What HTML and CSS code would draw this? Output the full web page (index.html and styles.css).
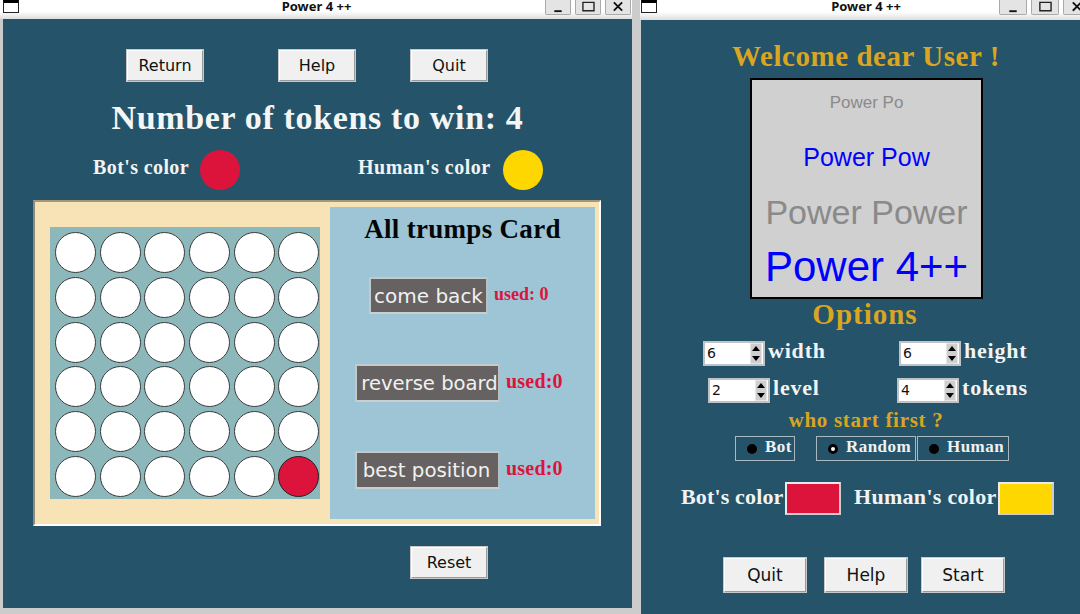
FILE: index.html
```html
<!DOCTYPE html>
<html lang="en">
<head>
<meta charset="utf-8">
<title>Power 4 ++</title>
<link rel="stylesheet" href="styles.css">
</head>
<body>
<main class="desktop">
  <section class="window game-window">
    <header class="titlebar">
      <span class="win-icon"></span>
      <span class="win-title">Power 4 ++</span>
      <span class="win-controls">
        <span class="ctl"><svg viewBox="0 0 26 15"><path d="M9 11h8v2H9z" fill="#111"/></svg></span>
        <span class="ctl"><svg viewBox="0 0 26 15"><path d="M7.500 2.500h12v9h-12z" fill="none" stroke="#222" stroke-width="1.500"/></svg></span>
        <span class="ctl"><svg viewBox="0 0 26 15"><path d="M8.500 2.500l9 9M17.500 2.500l-9 9" fill="none" stroke="#111" stroke-width="2"/></svg></span>
      </span>
    </header>
    <div class="game-body">
      <div class="top-buttons">
        <button class="btn btn-top">Return</button>
        <button class="btn btn-top">Help</button>
        <button class="btn btn-top">Quit</button>
      </div>
      <h1 class="tokens-title">Number of tokens to win: 4</h1>
      <div class="color-row">
        <span class="color-label bot-label">Bot's color</span>
        <span class="token-dot crimson"></span>
        <span class="color-label human-label">Human's color</span>
        <span class="token-dot gold"></span>
      </div>
      <div class="play-panel">
        <div class="board">
          <span class="cell"></span><span class="cell"></span><span class="cell"></span><span class="cell"></span><span class="cell"></span><span class="cell"></span>
          <span class="cell"></span><span class="cell"></span><span class="cell"></span><span class="cell"></span><span class="cell"></span><span class="cell"></span>
          <span class="cell"></span><span class="cell"></span><span class="cell"></span><span class="cell"></span><span class="cell"></span><span class="cell"></span>
          <span class="cell"></span><span class="cell"></span><span class="cell"></span><span class="cell"></span><span class="cell"></span><span class="cell"></span>
          <span class="cell"></span><span class="cell"></span><span class="cell"></span><span class="cell"></span><span class="cell"></span><span class="cell"></span>
          <span class="cell"></span><span class="cell"></span><span class="cell"></span><span class="cell"></span><span class="cell"></span><span class="cell cell-red"></span>
        </div>
        <aside class="trumps">
          <h2 class="trumps-title">All trumps Card</h2>
          <div class="trump-row row-back">
            <button class="btn-dark btn-back">come back</button>
            <span class="used used-small">used: 0</span>
          </div>
          <div class="trump-row row-wide">
            <button class="btn-dark btn-wide btn-reverse">reverse board</button>
            <span class="used">used:0</span>
          </div>
          <div class="trump-row row-wide">
            <button class="btn-dark btn-wide btn-best">best position</button>
            <span class="used">used:0</span>
          </div>
        </aside>
      </div>
      <div class="reset-row"><button class="btn btn-top">Reset</button></div>
    </div>
  </section>

  <section class="window menu-window">
    <header class="titlebar">
      <span class="win-icon"></span>
      <span class="win-title">Power 4 ++</span>
      <span class="win-controls">
        <span class="ctl"><svg viewBox="0 0 26 15"><path d="M9 11h8v2H9z" fill="#111"/></svg></span>
        <span class="ctl"><svg viewBox="0 0 26 15"><path d="M7.500 2.500h12v9h-12z" fill="none" stroke="#222" stroke-width="1.500"/></svg></span>
        <span class="ctl"><svg viewBox="0 0 26 15"><path d="M8.500 2.500l9 9M17.500 2.500l-9 9" fill="none" stroke="#111" stroke-width="2"/></svg></span>
      </span>
    </header>
    <div class="menu-body">
      <h1 class="welcome">Welcome dear User !</h1>
      <div class="splash">
        <span class="splash-line s1">Power Po</span>
        <span class="splash-line s2">Power Pow</span>
        <span class="splash-line s3">Power Power</span>
        <span class="splash-line s4">Power 4++</span>
      </div>
      <h2 class="options">Options</h2>
      <div class="opt-row opt-row-a">
        <span class="spin"><span class="spin-val">6</span><span class="arrows"><i class="up"></i><i class="down"></i></span></span>
        <span class="opt-label label-width">width</span>
        <span class="spin"><span class="spin-val">6</span><span class="arrows"><i class="up"></i><i class="down"></i></span></span>
        <span class="opt-label">height</span>
      </div>
      <div class="opt-row opt-row-b">
        <span class="spin"><span class="spin-val">2</span><span class="arrows"><i class="up"></i><i class="down"></i></span></span>
        <span class="opt-label label-level">level</span>
        <span class="spin"><span class="spin-val">4</span><span class="arrows"><i class="up"></i><i class="down"></i></span></span>
        <span class="opt-label">tokens</span>
      </div>
      <h3 class="who">who start first ?</h3>
      <div class="radios">
        <span class="radio radio-bot"><i class="mark"></i>Bot</span>
        <span class="radio radio-random"><i class="mark mark-on"></i>Random</span>
        <span class="radio radio-human"><i class="mark"></i>Human</span>
      </div>
      <div class="pick-row">
        <span class="pick-label">Bot's color</span>
        <span class="swatch crimson"></span>
        <span class="pick-label pick-human">Human's color</span>
        <span class="swatch gold"></span>
      </div>
      <div class="menu-buttons">
        <button class="btn btn-menu">Quit</button>
        <button class="btn btn-menu">Help</button>
        <button class="btn btn-menu">Start</button>
      </div>
    </div>
  </section>
</main>
</body>
</html>
```

FILE: styles.css
```css
* { box-sizing: border-box; }
html, body { margin: 0; padding: 0; width: 1080px; height: 614px; overflow: hidden; background: #cccccc; }
h1, h2, h3 { margin: 0; }
.desktop { display: flex; width: 1080px; height: 614px; overflow: hidden; }
.window { display: flex; flex-direction: column; flex: none; }
.game-window { width: 632px; height: 608px; margin-right: 8px; }
.menu-window { width: 440px; height: 614px; }

.titlebar { position: relative; flex: none; height: 19px; background: linear-gradient(#ffffff 0, #ffffff 60%, #dddddd 100%); display: block; }
.menu-window .titlebar { height: 20px; }
.win-icon { position: absolute; left: 3px; top: 0; width: 16px; height: 13px; background: #fff; border: 1px solid #222; border-top: 3px solid #000; }
.menu-window .win-icon { left: 1px; }
.win-title { display: block; text-align: center; font: bold 13px/12px "Noto Sans", "DejaVu Sans", sans-serif; color: #111; padding-left: 1px; }
.menu-window .win-title { padding-left: 12px; }
.win-controls { position: absolute; right: 1px; top: 0; display: flex; gap: 4px; }
.menu-window .win-controls { right: -11px; }
.ctl { display: block; width: 26px; height: 15px; background: #e4e4e4; border: 1px solid #aaaaaa; border-top: 0; border-radius: 0 0 2px 2px; }
.menu-window .ctl { width: 28px; }
.ctl svg { display: block; width: 24px; height: 14px; }
.menu-window .ctl svg { width: 26px; }

.btn { font-family: "DejaVu Sans", sans-serif; font-size: 16px; color: #111; background: #f0f0f0; border: 2px solid; border-color: #ffffff #9a9a9a #9a9a9a #ffffff; padding: 0; outline: 1px solid #c8c8c8; outline-offset: -1px; }
.btn-top { width: 78px; height: 33px; }
.btn-menu { width: 84px; height: 36px; font-size: 17px; }

.game-body { width: 629px; height: 589px; margin-left: 3px; background: #255369; padding-top: 30px; }
.top-buttons { display: flex; padding-left: 123px; }
.top-buttons .btn + .btn { margin-left: 74px; }
.top-buttons .btn + .btn + .btn { margin-left: 54px; }
.tokens-title { margin-top: 18px; height: 36px; font: bold 34px/36px "Liberation Serif", serif; letter-spacing: 0.65px; color: #f4f6f6; text-align: center; }
.color-row { display: flex; align-items: center; height: 40px; margin-top: 14px; padding-left: 90px; }
.color-label { font: bold 20px/24px "Liberation Serif", serif; letter-spacing: 0.4px; color: #f1f3f4; white-space: nowrap; margin-top: -6px; }
.bot-label { width: 107px; }
.human-label { width: 145px; margin-left: 118px; letter-spacing: 0.5px; }
.token-dot { width: 40px; height: 40px; border-radius: 50%; display: block; flex: none; }
.crimson { background: #dc143c; }
.gold { background: #ffd700; }

.play-panel { display: flex; align-items: flex-start; gap: 10px; width: 568px; height: 326px; margin-top: 10px; margin-left: 30px; padding: 5px 4px 5px 15px; background: #f8e3b6; border: 2px solid; border-color: #a3977a #ffffff #ffffff #8f8a78; }
.board { display: grid; grid-template-columns: repeat(6, 41px); grid-auto-rows: 41px; column-gap: 3.7px; row-gap: 3.75px; align-content: start; flex: none; width: 270px; height: 272px; margin-top: 20px; padding: 5px 0 0 5px; background: #8db8bb; }
.cell { display: block; background: #fff; border: 1.500px solid #3a3a3a; border-radius: 50%; }
.cell-red { background: #dc143c; border-color: #222; }

.trumps { flex: none; display: flex; flex-direction: column; width: 265px; height: 312px; background: #9dc5d6; }
.trumps-title { margin-top: 7px; height: 30px; text-align: center; font: bold 27px/30px "Liberation Serif", serif; letter-spacing: 0.3px; color: #050505; }
.trump-row { display: flex; align-items: center; }
.row-back { margin-top: 33px; height: 37px; padding-left: 39px; gap: 6px; }
.row-wide { margin-top: 50px; height: 38px; padding-left: 25px; gap: 6px; }
.row-wide + .row-wide { margin-top: 49px; }
.btn-dark { font: 20px "DejaVu Sans", sans-serif; color: #f1f1f1; background: #666261; border: 2px solid; border-color: #c4c9cc #b9c0c4 #c9ced1 #c4c9cc; padding: 0; white-space: nowrap; }
.btn-back { width: 119px; height: 37px; }
.btn-wide { width: 145px; height: 38px; }
.btn-reverse { font-size: 19.600px; padding-left: 4px; }
.btn-best { font-size: 19.800px; padding-right: 2px; }
.used { font: bold 20px/24px "Liberation Serif", serif; color: #dc143c; margin-top: -4px; }
.used-small { font-size: 18px; margin-top: -3px; }
.row-wide .used { letter-spacing: 0.2px; }

.reset-row { margin-top: 20px; padding-left: 407px; }

.menu-body { width: 440px; height: 594px; margin-left: 1px; background: #255369; padding-top: 18px; position: relative; }
.welcome { width: 438px; height: 36px; text-align: center; margin-left: 6px; font: bold 29px/36px "Liberation Serif", serif; letter-spacing: 0.55px; color: #daa520; }
.splash { display: flex; flex-direction: column; align-items: center; width: 233px; height: 221px; margin-top: 4px; margin-left: 109px; background: #d0d0d0; border: 2px solid #000; padding-top: 13px; }
.splash-line { font-family: "Liberation Sans", Arial, sans-serif; white-space: nowrap; display: block; }
.s1 { font-size: 17px; line-height: 20px; color: #8a8a8a; }
.s2 { font-size: 25px; line-height: 30px; color: #0000ff; margin-top: 29px; }
.s3 { font-size: 34px; line-height: 40px; color: #8a8a8a; margin-top: 20px; }
.s4 { font-size: 42px; line-height: 48px; color: #0000ff; margin-top: 11px; }
.options { height: 32px; width: 438px; margin-left: 5px; margin-top: -1px; text-align: center; font: bold 29px/32px "Liberation Serif", serif; letter-spacing: 1px; color: #daa520; }

.opt-row { display: flex; align-items: center; height: 25px; }
.opt-row-a { margin-top: 11px; padding-left: 62px; }
.opt-row-b { margin-top: 12px; padding-left: 67px; }
.spin { flex: none; display: flex; width: 62px; height: 25px; background: #fff; border: 2px solid #bfc3c5; padding: 0 1px 0 1px; }
.spin-val { flex: 1; font: 14px/21px "DejaVu Sans", sans-serif; color: #111; padding-left: 1px; }
.arrows { display: flex; flex-direction: column; flex: none; width: 12px; height: 21px; background: #cfcfcf; border: 1px solid #e6e6e6; align-items: center; justify-content: space-around; }
.arrows i { display: block; width: 0; height: 0; border-left: 4px solid transparent; border-right: 4px solid transparent; }
.arrows .up { border-bottom: 5px solid #000; }
.arrows .down { border-top: 5px solid #000; }
.opt-label { font: bold 22px/25px "Liberation Serif", serif; letter-spacing: 0.8px; color: #f1f3f4; margin-left: 3px; margin-top: -6px; white-space: nowrap; }
.label-width { width: 131px; }
.label-level { width: 123px; }
.opt-row-b .label-level { width: 124px; }

.who { margin-top: 5px; height: 24px; width: 438px; margin-left: 6px; text-align: center; font: bold 21px/24px "Liberation Serif", serif; letter-spacing: 0.7px; color: #daa520; }
.radios { display: flex; margin-top: 4px; padding-left: 94px; height: 25px; }
.radio { display: flex; align-items: center; height: 25px; border: 1px solid #a9b7bf; font: bold 17px/18px "Liberation Serif", serif; letter-spacing: 0.45px; color: #eef1f2; padding-bottom: 4px; white-space: nowrap; }
.radio-bot { width: 60px; padding-left: 11px; }
.radio-random { width: 100px; margin-left: 21px; padding-left: 11px; }
.radio-human { width: 92px; margin-left: 1px; padding-left: 11px; }
.mark { flex: none; display: block; width: 10px; height: 10px; margin-top: 4px; margin-right: 8px; border-radius: 50%; background: #000; }
.mark-on { background: #fff; border: 3px solid #000; }

.pick-row { display: flex; align-items: center; height: 33px; margin-top: 21px; padding-left: 40px; }
.pick-label { font: bold 22px/26px "Liberation Serif", serif; letter-spacing: 0.15px; color: #f1f3f4; width: 104px; white-space: nowrap; margin-top: -4px; }
.pick-human { width: 144px; margin-left: 13px; letter-spacing: 0.3px; }
.swatch { display: block; width: 56px; height: 33px; border: 2px solid; border-color: #e8eaeb #c9cdd0 #c9cdd0 #e8eaeb; }
.menu-buttons { display: flex; margin-top: 42px; padding-left: 82px; }
.menu-buttons .btn + .btn { margin-left: 17px; }
.menu-buttons .btn + .btn + .btn { margin-left: 13px; }
```
